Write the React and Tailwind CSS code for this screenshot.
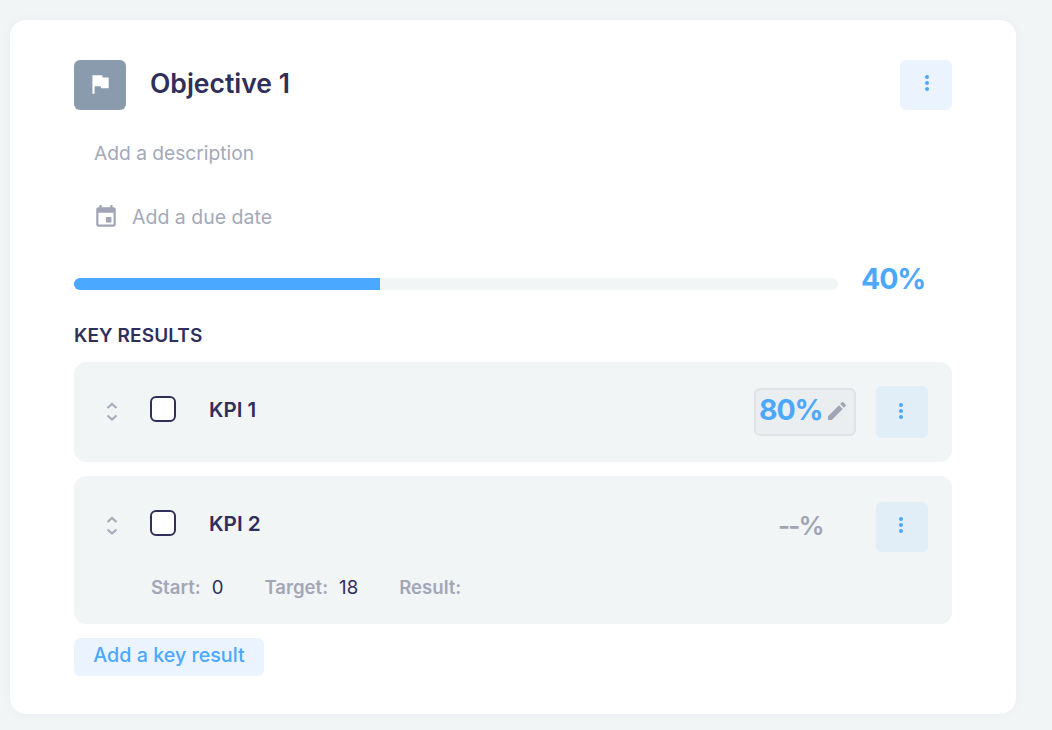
function Dots({ className = "" }) {
  return (
    <button className={`flex items-center justify-center rounded-md ${className}`}>
      <span className="flex flex-col gap-[2.3px]">
        <span className="block w-1 h-1 rounded-full bg-[#4aa8ff]" />
        <span className="block w-1 h-1 rounded-full bg-[#4aa8ff]" />
        <span className="block w-1 h-1 rounded-full bg-[#4aa8ff]" />
      </span>
    </button>
  );
}

function Sorter({ className = "" }) {
  return (
    <svg width="14" height="22" viewBox="0 0 14 22" fill="none" stroke="#a8abba" strokeWidth="2.2" className={`ml-[31px] mr-[31px] shrink-0 ${className}`}>
      <path d="M2.5 8 7 4l4.5 4" />
      <path d="M2.5 15.5 7 19.5l4.5-4" />
    </svg>
  );
}

function Check({ className = "" }) {
  return <span className={`block w-[26px] h-[26px] shrink-0 rounded-md border-2 border-[#302e5a] bg-white ${className}`} />;
}

export default function App() {
  return (
    <div className="w-[1052px] h-[730px] overflow-hidden bg-[#f1f5f6] pt-5 pl-2.5 font-['Inter','Liberation_Sans',sans-serif] text-[#302e5a]">
      <div className="w-[1006px] h-[694px] rounded-2xl bg-white pt-10 px-16 shadow-[0_0_12px_rgba(40,60,80,0.04)]">
        <div className="flex items-center h-[50px]">
          <div className="w-[52px] h-[50px] rounded-md bg-[#8a9bae] flex items-center justify-center">
            <svg width="26" height="26" viewBox="0 0 24 24" fill="#fff" className="mb-[3px]"><path d="M14.4 6 14 4H5v17h2v-7h5.6l.4 2h7V6z" /></svg>
          </div>
          <div className="ml-6 mb-1 text-[26.5px] font-semibold leading-none">Objective 1</div>
          <Dots className="ml-auto w-[52px] h-[50px] bg-[#ebf4fe] pb-1 pl-px" />
        </div>
        <div className="mt-[31px] ml-5 text-[19.2px] leading-[24px] text-[#a3a9b9]">Add a description</div>
        <div className="mt-[40px] ml-[20px] flex items-center h-[24px] text-[19.5px] text-[#a3a9b9]">
          <svg width="26" height="26" viewBox="0 0 24 24" fill="#a0a4b4" className="-ml-[1px]">
            <path d="M17 12h-5v5h5v-5zM16 1v2H8V1H6v2H5c-1.11 0-1.99.9-1.99 2L3 19c0 1.1.89 2 2 2h14c1.1 0 2-.9 2-2V5c0-1.1-.9-2-2-2h-1V1h-2zm3 18H5V8h14v11z" />
          </svg>
          <span className="ml-[13px] pt-px">Add a due date</span>
        </div>
        <div className="mt-[37px] flex items-center h-[36px]">
          <div className="w-[764px] h-3 rounded-full bg-[#f1f5f6] overflow-hidden">
            <div className="w-[306px] h-3 bg-[#4aa8ff]" />
          </div>
          <div className="ml-[23px] mb-[10px] text-[28.5px] font-bold tracking-[-0.04em] text-[#4aa8ff] leading-none">40%</div>
        </div>
        <div className="mt-[22px] text-[19px] font-semibold tracking-[0.1px] leading-[24px] uppercase">Key results</div>
        <div className="mt-[14px] h-[100px] rounded-xl bg-[#f1f5f6] flex pt-6 pr-6">
          <div className="flex items-center h-[52px] w-full">
            <Sorter className="mb-[2px]" />
            <Check className="mb-[6px]" />
            <div className="ml-[33px] mb-[3px] text-[20.5px] font-semibold leading-none">KPI 1</div>
            <div className="ml-auto flex items-center h-[48px] w-[102px] rounded-md border-2 border-[#dfe3e6] bg-[#ebeef0] pl-[3px]">
              <span className="mb-1 text-[28.5px] font-bold tracking-[-0.04em] text-[#4aa8ff] leading-none">80%</span>
              <svg width="24" height="24" viewBox="0 0 24 24" fill="#a0a4b4" className="ml-[3px] mb-[2px] shrink-0">
                <path d="M3 17.25V21h3.75L17.81 9.94l-3.75-3.75L3 17.25zM20.71 7.04a1 1 0 0 0 0-1.41l-2.34-2.34a1 1 0 0 0-1.41 0l-1.83 1.83 3.75 3.75 1.83-1.83z" />
              </svg>
            </div>
            <Dots className="ml-5 w-[52px] h-[52px] bg-[#e1edf7] pb-[2px] pr-[2px]" />
          </div>
        </div>
        <div className="mt-[14px] h-[148px] rounded-xl bg-[#f1f5f6] pt-[26px] pr-6">
          <div className="flex items-center h-[50px]">
            <Sorter className="mb-1" />
            <Check className="mb-2" />
            <div className="ml-[33px] mb-[5px] text-[20.7px] font-semibold leading-none">KPI 2</div>
            <div className="ml-auto mb-[3px] w-[102px] text-[26px] font-semibold tracking-[-0.07em] text-[#a0a4b4] leading-none pl-[24px]">--%</div>
            <Dots className="ml-5 w-[52px] h-[50px] bg-[#e1edf7] pb-1 pr-[2px]" />
          </div>
          <div className="mt-[23px] ml-[77px] flex items-center text-[18.6px] leading-[24px]">
            <span className="font-semibold text-[#a3a6b7]">Start:</span>
            <span className="ml-[11px]">0</span>
            <span className="ml-[41px] font-semibold text-[#a3a6b7]">Target:</span>
            <span className="ml-[11px]">18</span>
            <span className="ml-[41px] font-semibold text-[#a3a6b7]">Result:</span>
          </div>
        </div>
        <button className="mt-[14px] block w-[190px] h-[38px] rounded-md bg-[#ebf4fe] pb-[3px] text-[19.7px] font-medium text-[#4aa8ff] leading-none">Add a key result</button>
      </div>
    </div>
  );
}
